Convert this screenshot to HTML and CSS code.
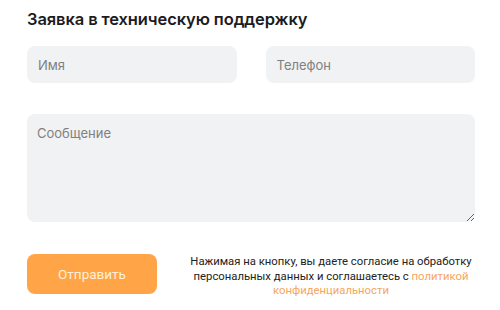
FILE: index.html
```html
<!DOCTYPE html>
<html lang="ru">
<head>
<meta charset="utf-8">
<link rel="stylesheet" href="styles.css">
</head>
<body>
<form class="form">
  <h2 class="title">Заявка в техническую поддержку</h2>
  <div class="row">
    <input class="field" type="text" placeholder="Имя">
    <input class="field" type="text" placeholder="Телефон">
  </div>
  <textarea class="field area" placeholder="Сообщение"></textarea>
  <div class="bottom">
    <button class="btn" type="button">Отправить</button>
    <p class="note">Нажимая на кнопку, вы даете согласие на обработку персональных данных и соглашаетесь с <a class="link" href="#">политикой</a> <a class="link" href="#">конфиденциальности</a></p>
  </div>
</form>
</body>
</html>
```
FILE: styles.css
```css
html, body {
  margin: 0;
  padding: 0;
  background: #ffffff;
}
body {
  font-family: Inter, "Noto Sans", sans-serif;
  color: #1d1d1f;
}
.form {
  width: 448px;
  padding: 8px 0 0 27px;
  display: flex;
  flex-direction: column;
}
.title {
  margin: 0;
  font-size: 16.5px;
  font-weight: 600;
  line-height: 22px;
  letter-spacing: -0.1px;
  color: #1c1c1e;
}
.row {
  display: grid;
  grid-template-columns: 1fr 1fr;
  gap: 29px;
  margin-top: 16px;
}
.field {
  box-sizing: border-box;
  width: 100%;
  min-width: 0;
  height: 37px;
  border: none;
  border-radius: 8px;
  background: #f1f2f4;
  padding: 0 11px;
  font-family: Inter, "Noto Sans", sans-serif;
  font-size: 13px;
  color: #333;
  outline: none;
}
.field::placeholder {
  color: #808080;
}
.area {
  margin-top: 31px;
  height: 108px;
  padding: 11px 10px;
  resize: vertical;
  display: block;
}
.bottom {
  display: flex;
  align-items: flex-start;
  gap: 30px;
  margin-top: 32px;
}
.btn {
  flex: none;
  width: 130px;
  height: 40px;
  border: none;
  border-radius: 8px;
  background: #ffa548;
  color: #fff1d8;
  font-family: Roboto, "Noto Sans", sans-serif;
  font-size: 13.5px;
  font-weight: 400;
}
.note {
  margin: 1px 0 0 0;
  flex: 1;
  text-align: center;
  font-family: Roboto, "Noto Sans", sans-serif;
  font-size: 11.3px;
  line-height: 14.5px;
  color: #222;
}
.link {
  color: #f5a65d;
  text-decoration: none;
}
```
